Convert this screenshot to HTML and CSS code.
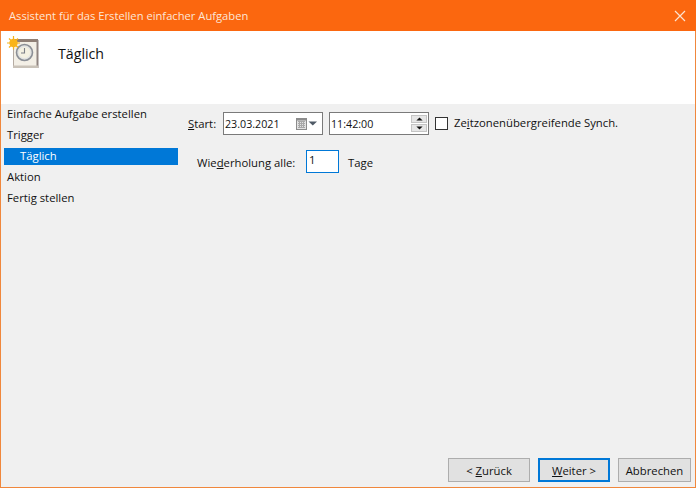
FILE: index.html
```html
<!DOCTYPE html>
<html lang="de">
<head>
<meta charset="utf-8">
<title>Assistent</title>
<link rel="stylesheet" href="styles.css">
</head>
<body>
<div class="window">
  <div class="titlebar">
    <span class="title">Assistent für das Erstellen einfacher Aufgaben</span>
    <svg class="close" width="12" height="12" viewBox="0 0 12 12"><path d="M1 1 L11 11 M11 1 L1 11" stroke="#fde3d0" stroke-width="1.2" fill="none"/></svg>
  </div>
  <div class="header">
    <svg class="hicon" width="34" height="34" viewBox="0 0 34 34">
      <rect x="6.5" y="3.5" width="24" height="28" fill="#f3efe6" stroke="#b5aba2"/>
      <rect x="7" y="3" width="24" height="3" fill="#8f7f76"/>
      <rect x="29.5" y="4" width="2" height="28" fill="#8f8480"/>
      <rect x="6" y="29.5" width="25" height="2.5" fill="#c9c2b8"/>
      <circle cx="17.5" cy="16.5" r="8" fill="#e3e4e2" stroke="#8b8f96" stroke-width="1.6"/>
      <circle cx="17.5" cy="16.5" r="5.6" fill="#f4f1e2"/>
      <path d="M17.5 12 V17 H14" stroke="#7b7f86" stroke-width="1.1" fill="none"/>
      <g stroke="#f6b21b" stroke-width="1.2">
        <path d="M6.5 0 V13.5 M0 7 H13 M2 2.5 L11 11.5 M11 2.5 L2 11.5"/>
      </g>
      <circle cx="6.5" cy="7" r="4.2" fill="#f9b41a"/>
    </svg>
    <span class="htext">Täglich</span>
  </div>
  <div class="main">
    <nav class="side">
      <div class="step">Einfache Aufgabe erstellen</div>
      <div class="step">Trigger</div>
      <div class="step step-active"><span class="selected">Täglich</span></div>
      <div class="step">Aktion</div>
      <div class="step">Fertig stellen</div>
    </nav>
    <div class="content">
      <div class="row-start">
        <span class="lbl-start"><u>S</u>tart:</span>
        <div class="field date">
          <span class="val">23.03.2021</span>
          <svg class="cal" width="22" height="12" viewBox="0 0 22 12">
            <rect x="0.5" y="0.5" width="10" height="11" fill="#e2e2e2" stroke="#8c8c8c"/>
            <path d="M2 3.5 H9 M2 5.5 H9 M2 7.5 H9 M2 9.5 H9 M3.5 3 V10 M5.5 3 V10 M7.5 3 V10" stroke="#a8a8a8" stroke-width="1"/>
            <rect x="0.5" y="0.5" width="10" height="2" fill="#8c8c8c"/>
            <path d="M12.5 3.5 H21 L16.8 7.5 Z" fill="#4f5a66"/>
          </svg>
        </div>
        <div class="field time">
          <span class="val">11:42:00</span>
          <div class="spin">
            <div class="spinbtn"><svg width="9" height="5" viewBox="0 0 9 5"><path d="M4.5 0.5 L8.5 4.5 H0.5 Z" fill="#111"/></svg></div>
            <div class="spinbtn"><svg width="9" height="5" viewBox="0 0 9 5"><path d="M0.5 0.5 H8.5 L4.5 4.5 Z" fill="#111"/></svg></div>
          </div>
        </div>
        <span class="check"></span>
        <span class="lbl-check">Ze<u>i</u>tzonenübergreifende Synch.</span>
      </div>
      <div class="row-repeat">
        <span class="lbl-repeat">Wie<u>d</u>erholung alle:</span>
        <div class="count">1</div>
        <span class="lbl-days">Tage</span>
      </div>
    </div>
  </div>
  <div class="footer">
    <button class="btn back">&lt; <u>Z</u>urück</button>
    <button class="btn next"><u>W</u>eiter &gt;</button>
    <button class="btn cancel">Abbrechen</button>
  </div>
</div>
</body>
</html>
```

FILE: styles.css
```css
html, body { margin: 0; padding: 0; }
body {
  width: 696px;
  height: 488px;
  overflow: hidden;
  font-family: "Open Sans", "Noto Sans", sans-serif;
  font-size: 11.3px;
  color: #111;
}
.window {
  box-sizing: border-box;
  width: 696px;
  height: 488px;
  display: flex;
  flex-direction: column;
  background: #f0f0f0;
  border: 1px solid #f0873c;
  border-top: 0;
}
.titlebar {
  height: 31px;
  margin: 0 -1px;
  background: #fb670f;
  display: flex;
  align-items: center;
  justify-content: space-between;
  padding: 0 10px 0 9px;
  flex: none;
}
.title { color: #fde6d6; font-size: 11.2px; }
.close { display: block; }
.header {
  height: 73px;
  background: #fff;
  flex: none;
  display: flex;
  align-items: flex-start;
  padding: 5px 0 0 6px;
  box-sizing: border-box;
}
.hicon { display: block; }
.htext {
  font-size: 14.2px;
  margin: 8px 0 0 17px;
  color: #111;
}
.main {
  flex: 1;
  display: flex;
}
.side {
  width: 177px;
  flex: none;
  padding: 0 0 0 3px;
}
.step {
  box-sizing: border-box;
  height: 21px;
  display: flex;
  align-items: center;
  padding: 0 0 2px 3px;
  white-space: nowrap;
}
.step-active { padding-bottom: 0; }
.selected {
  display: block;
  margin-left: -3px;
  width: 174px;
  height: 17px;
  line-height: 16px;
  background: #0078d7;
  color: #fff;
  padding-left: 16px;
  box-sizing: border-box;
}
.content {
  flex: 1;
  padding: 8px 0 0 7px;
}
.row-start {
  display: flex;
  align-items: center;
  height: 23px;
}
.lbl-start { width: 35px; flex: none; }
.field {
  box-sizing: border-box;
  width: 100px;
  height: 23px;
  border: 1px solid #7a7a7a;
  background: #fff;
  display: flex;
  align-items: center;
  justify-content: space-between;
  padding-left: 1px;
}
.val { font-size: 10.7px; }
.date { padding-right: 4px; }
.time { margin-left: 6px; padding-right: 1px; }
.cal { display: block; }
.spin {
  display: flex;
  flex-direction: column;
  gap: 1px;
  width: 16px;
}
.spinbtn {
  height: 8px;
  background: #e6e6e6;
  border: 1px solid #c4c4c4;
  box-sizing: border-box;
  display: flex;
  align-items: center;
  justify-content: center;
}
.spinbtn svg { display: block; width: 7px; height: 4px; }
.check {
  box-sizing: border-box;
  width: 13px;
  height: 13px;
  border: 1px solid #333;
  background: #fff;
  margin-left: 6px;
  flex: none;
}
.lbl-check { margin-left: 6px; padding-bottom: 2px; white-space: nowrap; }
.row-repeat {
  display: flex;
  align-items: center;
  height: 23px;
  margin-top: 15px;
  padding-left: 9px;
}
.lbl-repeat { width: 109px; flex: none; white-space: nowrap; padding-top: 1px; }
.count {
  box-sizing: border-box;
  width: 33px;
  height: 23px;
  border: 1px solid #0078d7;
  background: #fff;
  padding: 1px 0 0 2px;
  line-height: 16px;
}
.lbl-days { margin-left: 9px; padding-top: 1px; }
.footer {
  flex: none;
  height: 29px;
  display: flex;
  justify-content: flex-end;
  gap: 8px;
  padding-right: 4px;
  align-items: flex-start;
}
.btn {
  box-sizing: border-box;
  height: 24px;
  width: 73px;
  background: #e1e1e1;
  border: 1px solid #adadad;
  font: inherit;
  color: #111;
  padding: 0;
}
.back { width: 82px; }
.next { border: 2px solid #0078d7; width: 72px; }
```
